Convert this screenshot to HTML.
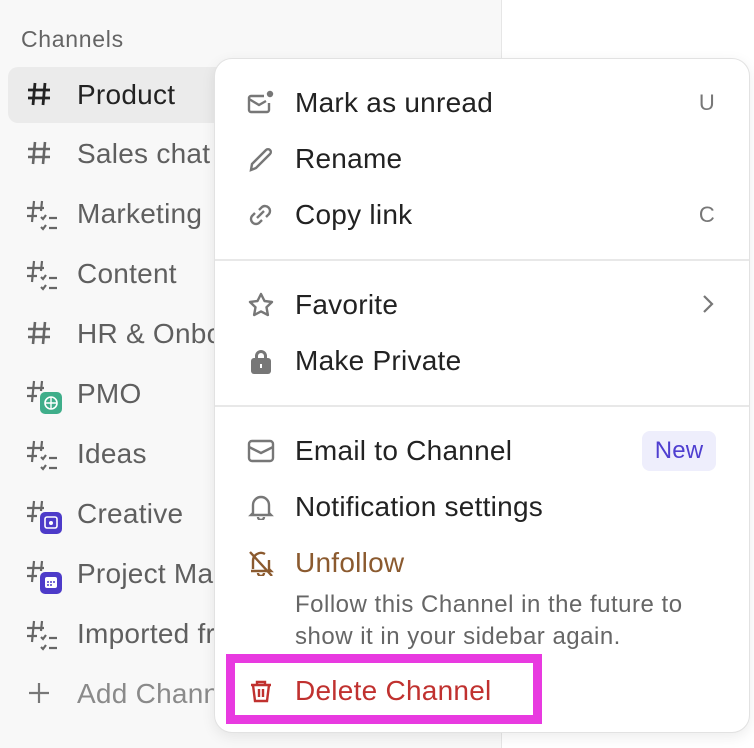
<!DOCTYPE html>
<html><head><meta charset="utf-8"><style>
*{margin:0;padding:0;box-sizing:border-box}
body{width:754px;height:748px;overflow:hidden;background:#fff;font-family:"Liberation Sans",sans-serif;position:relative}
.side{position:absolute;left:0;top:0;width:502px;height:748px;background:#f8f8f8;border-right:1px solid #e6e6e6}
.hdr{position:absolute;left:21px;top:26px;font-size:23px;letter-spacing:.7px;color:#646464}
.it{position:absolute;left:8px;width:240px;height:56px;font-size:28px;letter-spacing:.25px;color:#5f5f5f;line-height:56px;padding-left:69px;white-space:nowrap}
.it.sel{background:#ebebeb;border-radius:10px;color:#222}
.it svg{position:absolute;left:18px;top:14px}
.menu{position:absolute;left:214px;top:58px;width:536px;height:675px;background:#fff;border:1px solid #e2e2e2;border-radius:18px;box-shadow:0 4px 14px rgba(0,0,0,.08)}
.row{position:absolute;left:0;right:0;height:40px;font-size:28px;letter-spacing:.25px;color:#222;line-height:40px;padding-left:80px;white-space:nowrap}
.row svg{position:absolute;left:32px;top:7px}
.k{position:absolute;right:34px;top:0;color:#777;font-size:22px}
.div{position:absolute;left:0;right:0;height:2px;background:#e8e8e8}
</style></head><body>
<div class="side">
<div class="hdr">Channels</div>
<div class="it sel" style="top:67px"><svg width="26" height="26" viewBox="0 0 26 26" stroke="#222" stroke-width="2.8" fill="none"><path d="M9 2L7 24M19 2L17 24M2 9H24M2 17H24"/></svg>Product</div>
<div class="it" style="top:126px"><svg width="26" height="26" viewBox="0 0 26 26" stroke="#666" stroke-width="2.6" fill="none"><path d="M9 2L7 24M19 2L17 24M2 9H24M2 17H24"/></svg>Sales chat</div>
<div class="it" style="top:186px"><svg width="40" height="34" viewBox="0 0 40 34" stroke="#666" stroke-width="2.2" fill="none"><path d="M8 1L6 22M16 1L15 11M1 8H18M1 16H11M15 17l2 2 3-4M23 18H31M15 27l2 2 3-4M23 28H31"/></svg>Marketing</div>
<div class="it" style="top:246px"><svg width="40" height="34" viewBox="0 0 40 34" stroke="#666" stroke-width="2.2" fill="none"><path d="M8 1L6 22M16 1L15 11M1 8H18M1 16H11M15 17l2 2 3-4M23 18H31M15 27l2 2 3-4M23 28H31"/></svg>Content</div>
<div class="it" style="top:306px"><svg width="26" height="26" viewBox="0 0 26 26" stroke="#666" stroke-width="2.6" fill="none"><path d="M9 2L7 24M19 2L17 24M2 9H24M2 17H24"/></svg>HR &amp; Onboarding</div>
<div class="it" style="top:366px"><svg width="40" height="36" viewBox="0 0 40 36" fill="none"><path d="M8 1L6 22M16 1L15 11M1 8H18M1 16H11" stroke="#666" stroke-width="2.2"/><rect x="14" y="12" width="22" height="22" rx="5" fill="#3fae8a"/><circle cx="25" cy="23" r="6" stroke="#fff" stroke-width="1.6"/><path d="M19 23H31M25 17V29" stroke="#fff" stroke-width="1.4"/></svg>PMO</div>
<div class="it" style="top:426px"><svg width="40" height="34" viewBox="0 0 40 34" stroke="#666" stroke-width="2.2" fill="none"><path d="M8 1L6 22M16 1L15 11M1 8H18M1 16H11M15 17l2 2 3-4M23 18H31M15 27l2 2 3-4M23 28H31"/></svg>Ideas</div>
<div class="it" style="top:486px"><svg width="40" height="36" viewBox="0 0 40 36" fill="none"><path d="M8 1L6 22M16 1L15 11M1 8H18M1 16H11" stroke="#666" stroke-width="2.2"/><rect x="14" y="12" width="22" height="22" rx="5" fill="#4d3bc9"/><rect x="19" y="17" width="12" height="11" rx="2" stroke="#fff" stroke-width="1.6"/><circle cx="25" cy="23" r="2" fill="#fff"/></svg>Creative</div>
<div class="it" style="top:546px"><svg width="40" height="36" viewBox="0 0 40 36" fill="none"><path d="M8 1L6 22M16 1L15 11M1 8H18M1 16H11" stroke="#666" stroke-width="2.2"/><rect x="14" y="12" width="22" height="22" rx="5" fill="#4d3bc9"/><rect x="19" y="17" width="12" height="11" rx="2" fill="#fff"/><path d="M21 22h2M24 22h2M27 22h2M21 25h2M24 25h2" stroke="#4d3bc9" stroke-width="1.4"/></svg>Project Management</div>
<div class="it" style="top:606px"><svg width="40" height="34" viewBox="0 0 40 34" stroke="#666" stroke-width="2.2" fill="none"><path d="M8 1L6 22M16 1L15 11M1 8H18M1 16H11M15 17l2 2 3-4M23 18H31M15 27l2 2 3-4M23 28H31"/></svg>Imported from</div>
<div class="it" style="top:666px;color:#8a8a8a"><svg width="26" height="26" viewBox="0 0 26 26" stroke="#777" stroke-width="2.2" fill="none"><path d="M13 3V23M3 13H23"/></svg>Add Channel</div>
</div>
<div class="menu">
<div class="row" style="top:24px"><svg width="28" height="26" viewBox="0 0 28 26" fill="none" stroke="#777" stroke-width="2.4"><path d="M17 6H4a2 2 0 0 0-2 2v12a2 2 0 0 0 2 2h16a2 2 0 0 0 2-2v-7"/><path d="M2 9l10 6 7-4"/><circle cx="23" cy="4" r="3.2" fill="#777" stroke="none"/></svg>Mark as unread<span class="k">U</span></div>
<div class="row" style="top:80px"><svg width="28" height="26" viewBox="0 0 28 26" fill="none" stroke="#777" stroke-width="2.4"><path d="M4 24l1-6L19 4a2.8 2.8 0 0 1 4 4L9 22z"/></svg>Rename</div>
<div class="row" style="top:136px"><svg width="28" height="26" viewBox="0 0 28 26" fill="none" stroke="#777" stroke-width="2.4"><path d="M12 8l3-3a5 5 0 0 1 7 7l-3 3M15 18l-3 3a5 5 0 0 1-7-7l3-3M10 16l7-7"/></svg>Copy link<span class="k">C</span></div>
<div class="div" style="top:200px"></div>
<div class="row" style="top:226px"><svg width="28" height="26" viewBox="0 0 28 26" fill="none" stroke="#777" stroke-width="2.4" stroke-linejoin="round"><path d="M14 2l3.5 7 7.5 1-5.5 5.3 1.4 7.7L14 19.4 7.1 23l1.4-7.7L3 10l7.5-1z"/></svg>Favorite<span class="k" style="top:-1px"><svg width="14" height="22" viewBox="0 0 14 22" style="position:static;margin-top:9px" fill="none" stroke="#777" stroke-width="2.2"><path d="M3 3l8 8-8 8"/></svg></span></div>
<div class="row" style="top:282px"><svg width="28" height="26" viewBox="0 0 28 26" fill="#777"><path d="M8 11V8a6 6 0 0 1 12 0v3h-3V8a3 3 0 0 0-6 0v3z"/><rect x="4" y="10" width="20" height="16" rx="3"/><rect x="13" y="16" width="2" height="4" fill="#fff"/></svg>Make Private</div>
<div class="div" style="top:346px"></div>
<div class="row" style="top:372px"><svg width="28" height="26" viewBox="0 0 28 26" fill="none" stroke="#777" stroke-width="2.4"><rect x="2" y="3" width="24" height="20" rx="3"/><path d="M2 9l12 6 12-6"/></svg>Email to Channel<span style="position:absolute;right:33px;top:0;height:40px;width:74px;background:#eeeefc;border-radius:8px;color:#4f3fd0;font-size:24px;letter-spacing:.2px;text-align:center">New</span></div>
<div class="row" style="top:428px"><svg width="28" height="26" viewBox="0 0 28 26" fill="none" stroke="#777" stroke-width="2.4"><path d="M6 19V11a8 8 0 0 1 16 0v8l2 2H4z"/><path d="M11 23a3 3 0 0 0 6 0"/></svg>Notification settings</div>
<div class="row" style="top:484px;color:#8b5a2f"><svg width="28" height="26" viewBox="0 0 28 26" fill="none" stroke="#8b5a2f" stroke-width="2.4"><path d="M6 19V11a8 8 0 0 1 12-7M22 10v9l2 2H4"/><path d="M11 23a3 3 0 0 0 6 0M3 2l22 24"/></svg>Unfollow</div>
<div style="position:absolute;left:80px;top:530px;font-size:24px;letter-spacing:.5px;line-height:32px;color:#666;white-space:nowrap">Follow this Channel in the future to<br>show it in your sidebar again.</div>
<div class="row" style="top:612px;color:#c0312f"><svg width="28" height="26" viewBox="0 0 28 26" fill="none" stroke="#c0312f" stroke-width="2.4"><path d="M4 7h20M10 7V4h8v3M6 7l2 16h12l2-16M12 11v8M16 11v8"/></svg>Delete Channel</div>
</div>
<div style="position:absolute;left:226px;top:654px;width:316px;height:70px;border:9px solid #e83ae0"></div>
</body></html>
